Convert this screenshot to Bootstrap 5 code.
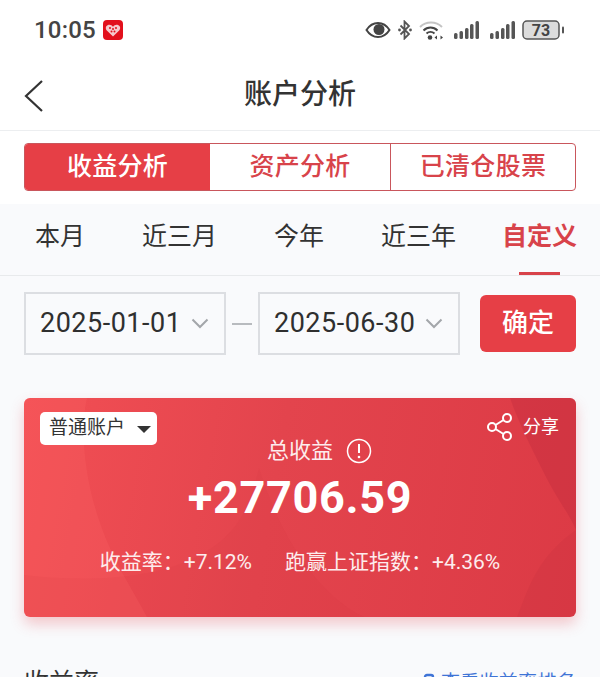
<!DOCTYPE html>
<html lang="zh">
<head>
<meta charset="utf-8">
<title>账户分析</title>
<link href="https://cdn.jsdelivr.net/npm/bootstrap@5.3.0/dist/css/bootstrap.min.css" rel="stylesheet">
<style>
html,body{height:677px;overflow:hidden}
body{width:600px;background:#f9fafc;font-family:Roboto,"Noto Sans CJK SC",sans-serif;color:#333}
.status-row{height:60px;background:#fff;padding:0 35px 0 34px}
.clock{font-size:24px;font-weight:500;color:#444;line-height:1;letter-spacing:.2px}
.app-mark{width:20px;height:20px;margin-left:7px}
.status-icons{gap:7px}
.title-row{height:71px;background:#fff;border-bottom:1px solid #eceef0;position:relative}
.title-text{font-size:28px;font-weight:500;color:#333;line-height:1}
.back-arrow{position:absolute;left:24px;top:19px}
.seg-wrap{height:73px;background:#fff;padding:12px 24px 13px}
.seg{height:48px;border:1.5px solid #c9565c;border-radius:4px;overflow:hidden}
.seg-item{font-size:25px;font-weight:500;color:#d8434a;letter-spacing:.3px;border-right:1.5px solid #c9565c}
.seg-item:last-child{border-right:0}
.seg-a{width:185px;background:#e63f46;color:#fff;border-right:0}
.seg-b{width:181px}
.seg-c{flex:1}
.period-row{height:72px;border-bottom:1px solid #e8eaec;padding:0 23px 7px 35px;position:relative}
.period{font-size:25px;color:#333;line-height:1;font-weight:400;white-space:nowrap;margin-right:57px}
.period-on{color:#d8434a;font-weight:700;position:relative;margin:0 0 0 -11px}
.period-on::after{content:"";position:absolute;left:17px;right:17px;bottom:-26px;height:3px;background:#d8434a}
.date-row{padding:16px 24px 0}
.date-box{width:202px;height:63px;border:2px solid #dcdee2;padding:0 15px 0 14px;font-size:27px;color:#2f2f2f;letter-spacing:.5px}
.date-box svg{margin-left:auto}
.date-gap{width:32px}
.date-dash{width:20px;height:2px;background:#b8bbbf}
.ok-btn{width:96px;height:57px;background:#e63f46;border:0;border-radius:6px;color:#fff;font-size:26px;font-weight:500;margin:3px 0 0 20px;padding:0}
.ok-btn:hover{background:#e63f46;color:#fff}
.gain-card{margin:43px 24px 0;height:219px;border-radius:6px;color:#fff;position:relative;box-shadow:0 7px 14px rgba(226,70,78,.28);background:linear-gradient(100deg,#f24f54 0%,#e3444d 45%,#dc3a45 100%)}
.card-art{position:absolute;inset:0;width:100%;height:100%;border-radius:6px}
.acct-pill{position:absolute;left:16px;top:14px;width:117px;height:33px;background:#fff;border-radius:5px;color:#333;font-size:19px;padding-left:9px;gap:12px}
.acct-caret{width:0;height:0;border-left:7px solid transparent;border-right:7px solid transparent;border-top:7px solid #333;margin-top:2px}
.share-link{position:absolute;right:17px;top:15px;gap:10px;font-size:18px;line-height:1}
.gain-main{padding-top:38px;position:relative}
.gain-label{font-size:22px;gap:13px;line-height:30px;color:#fdeced;padding-left:39px}
.gain-num{font-size:45px;font-weight:700;line-height:52px;margin-top:6px;letter-spacing:.7px}
.gain-sub{font-size:21px;gap:33px;line-height:28px;margin-top:24px;color:#fdeced}
.foot-row{padding:51px 24px 0;position:relative}
.foot-title{font-size:25px;color:#333;line-height:30px}
.foot-link{font-size:19px;color:#3f74d6;line-height:30px;gap:6px;letter-spacing:.3px}
</style>
</head>
<body>
<div class="status-row d-flex align-items-center">
  <span class="clock">10:05</span>
  <svg class="app-mark" viewBox="0 0 20 20" aria-hidden="true"><rect width="20" height="20" rx="4" fill="#e2101c"/><path d="M10 16.500 3.800 10.400C2.200 8.700 2.600 5.800 5 5c2-.7 3.800.1 5 1.800C11.200 5.100 13 4.300 15 5c2.400.8 2.800 3.700 1.200 5.400Z" fill="#f6c9cc"/><g fill="#e2101c"><circle cx="7" cy="8" r="1"/><circle cx="10" cy="9" r="1"/><circle cx="13" cy="8" r="1"/><circle cx="8.500" cy="11.500" r="1"/><circle cx="11.500" cy="11.500" r="1"/></g></svg>
  <div class="status-icons d-flex align-items-center ms-auto">
    <svg width="26" height="18" viewBox="0 0 26 18" aria-hidden="true"><path d="M1.500 9C5 3.500 9 2 13 2s8 1.500 11.500 7C21 14.500 17 16 13 16S5 14.500 1.500 9Z" fill="none" stroke="#444" stroke-width="2"/><circle cx="14" cy="8.500" r="5.500" fill="#444"/></svg>
    <svg width="14" height="20" viewBox="0 0 14 20" aria-hidden="true"><path d="M2.500 5.500 11 14l-4.500 4.500v-17L11 6 2.500 14.500" fill="none" stroke="#555" stroke-width="1.800"/><circle cx="1.500" cy="10" r="1.400" fill="#555"/><circle cx="12.500" cy="10" r="1.400" fill="#555"/></svg>
    <svg width="24" height="20" viewBox="0 0 24 20" aria-hidden="true"><path d="M1 7c6-6 16-6 22 0" fill="none" stroke="#c4c4c4" stroke-width="2"/><path d="M4.500 10.500c4-4 10-4 14 0M7.500 13.500c2.300-2 5.700-2 8 0" fill="none" stroke="#444" stroke-width="2"/><circle cx="11" cy="17.500" r="2.300" fill="#444"/><path d="M15.500 17.500l2.500-2v4zM24 17.500l-2.500-2v4z" fill="#444"/></svg>
    <svg class="ms-1" width="25" height="20" viewBox="0 0 25 20" aria-hidden="true"><g fill="#555"><rect x="0" y="13" width="3.500" height="6" rx="1.500"/><rect x="5.500" y="11" width="3.500" height="8" rx="1.500"/><rect x="11" y="8" width="3.500" height="11" rx="1.500"/><rect x="16" y="4" width="3.500" height="15" rx="1.500"/><rect x="21.500" y="1" width="3.500" height="18" rx="1.500"/></g></svg>
    <svg class="ms-1" width="25" height="20" viewBox="0 0 25 20" aria-hidden="true"><g fill="#555"><rect x="0" y="13" width="3.500" height="6" rx="1.500"/><rect x="5.500" y="11" width="3.500" height="8" rx="1.500"/><rect x="11" y="8" width="3.500" height="11" rx="1.500"/><rect x="16" y="4" width="3.500" height="15" rx="1.500"/><rect x="21.500" y="1" width="3.500" height="18" rx="1.500"/></g></svg>
    <svg width="43" height="20" viewBox="0 0 43 20" role="img" aria-label="73"><rect x="1" y="1" width="36" height="18" rx="4" fill="#dcdcdc" stroke="#555" stroke-width="1.500"/><rect x="40" y="6.500" width="2" height="7" rx="1" fill="#555"/><text x="19" y="15.500" text-anchor="middle" font-family="Roboto,sans-serif" font-size="16" font-weight="700" fill="#444">73</text></svg>
  </div>
</div>
<div class="title-row d-flex align-items-center justify-content-center">
  <svg class="back-arrow" width="20" height="34" viewBox="0 0 20 34" aria-hidden="true"><path d="M18 2 2 17l16 15" fill="none" stroke="#333" stroke-width="2.200"/></svg>
  <span class="title-text">账户分析</span>
</div>
<div class="seg-wrap">
  <div class="seg d-flex">
    <div class="seg-item seg-a d-flex align-items-center justify-content-center">收益分析</div>
    <div class="seg-item seg-b d-flex align-items-center justify-content-center">资产分析</div>
    <div class="seg-item seg-c d-flex align-items-center justify-content-center">已清仓股票</div>
  </div>
</div>
<div class="period-row d-flex align-items-center">
  <span class="period">本月</span>
  <span class="period">近三月</span>
  <span class="period">今年</span>
  <span class="period">近三年</span>
  <span class="period period-on">自定义</span>
</div>
<div class="date-row d-flex align-items-start">
  <div class="date-box d-flex align-items-center">2025-01-01<svg width="18" height="11" viewBox="0 0 18 11" aria-hidden="true"><path d="M1.500 1.500 9 9l7.500-7.500" fill="none" stroke="#a3a6aa" stroke-width="2"/></svg></div>
  <div class="date-gap d-flex align-items-center justify-content-center align-self-center"><span class="date-dash"></span></div>
  <div class="date-box d-flex align-items-center">2025-06-30<svg width="18" height="11" viewBox="0 0 18 11" aria-hidden="true"><path d="M1.500 1.500 9 9l7.500-7.500" fill="none" stroke="#a3a6aa" stroke-width="2"/></svg></div>
  <button type="button" class="btn ok-btn">确定</button>
</div>
<div class="gain-card">
  <svg class="card-art" viewBox="0 0 552 219" preserveAspectRatio="none" aria-hidden="true">
    <path d="M0 0H63C55 35 62 85 76 125S105 185 123 219H0Z" fill="#ff6a6a" fill-opacity=".22"/>
    <path d="M0 177C60 184 125 182 170 160S225 110 235 70C260 150 300 200 340 219H0Z" fill="#c9303c" fill-opacity=".07"/>
    <path d="M486 0C495 25 505 45 520 75S545 115 552 132V0Z" fill="#b8283a" fill-opacity=".3"/>
    <path d="M493 219C505 190 512 160 552 132V219Z" fill="#b8283a" fill-opacity=".14"/>
  </svg>
  <div class="acct-pill d-flex align-items-center">普通账户<span class="acct-caret"></span></div>
  <div class="share-link d-flex align-items-center">
    <svg width="26" height="28" viewBox="0 0 26 28" aria-hidden="true"><g fill="none" stroke="#fff" stroke-width="2"><circle cx="5" cy="14" r="4"/><circle cx="20" cy="5" r="4"/><circle cx="20" cy="23" r="4"/><path d="M8.500 12 16.500 7M8.500 16l8 5"/></g></svg>
    <span>分享</span>
  </div>
  <div class="gain-main text-center">
    <div class="gain-label d-flex align-items-center justify-content-center">总收益<svg width="26" height="26" viewBox="0 0 26 26" aria-hidden="true"><circle cx="13" cy="13" r="11.500" fill="none" stroke="#fff" stroke-width="1.500"/><path d="M13 6v9" stroke="#fff" stroke-width="2"/><circle cx="13" cy="19" r="1.300" fill="#fff"/></svg></div>
    <div class="gain-num">+27706.59</div>
    <div class="gain-sub d-flex justify-content-center"><span>收益率：+7.12%</span><span>跑赢上证指数：+4.36%</span></div>
  </div>
</div>
<div class="foot-row d-flex justify-content-between">
  <span class="foot-title">收益率</span>
  <span class="foot-link d-flex align-items-center"><svg width="12" height="20" viewBox="0 0 12 20" aria-hidden="true"><path d="M2 18V4a2 2 0 0 1 2-2h4a2 2 0 0 1 2 2v14" fill="none" stroke="#3f74d6" stroke-width="2.400"/></svg>查看收益率排名</span>
</div>
<script src="https://cdn.jsdelivr.net/npm/bootstrap@5.3.0/dist/js/bootstrap.bundle.min.js"></script>
</body>
</html>
